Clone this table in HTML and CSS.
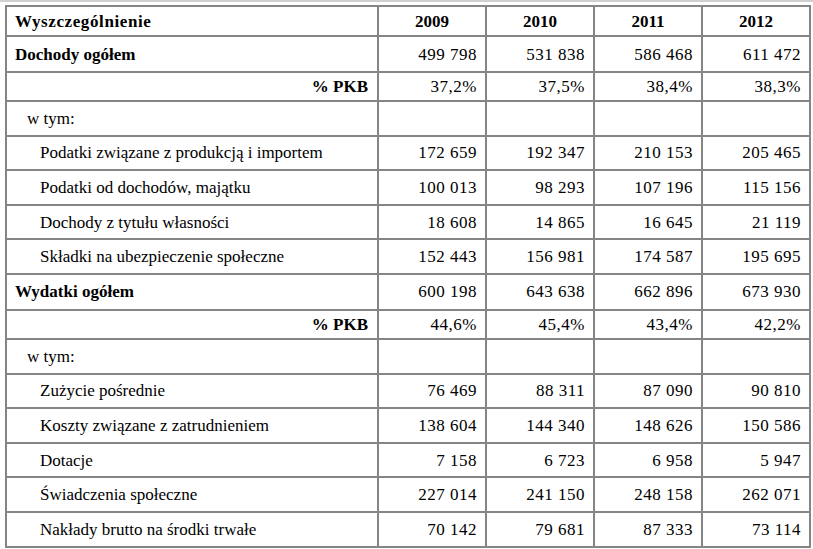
FILE: index.html
```html
<!DOCTYPE html>
<html lang="pl">
<head>
<meta charset="utf-8">
<title>Dochody i wydatki</title>
<link rel="stylesheet" href="styles.css">
</head>
<body>
<div class="topstrip"></div>
<table class="fin">
  <colgroup>
    <col class="c-name"><col class="c-num"><col class="c-num"><col class="c-num"><col class="c-num">
  </colgroup>
  <thead>
    <tr class="r-head">
      <th class="name">Wyszczególnienie</th><th>2009</th><th>2010</th><th>2011</th><th>2012</th>
    </tr>
  </thead>
  <tbody>
    <tr class="r-total dot">
      <td class="name b">Dochody ogółem</td><td>499 798</td><td>531 838</td><td>586 468</td><td>611 472</td>
    </tr>
    <tr class="r-pkb">
      <td class="pkb b">% PKB</td><td>37,2%</td><td>37,5%</td><td>38,4%</td><td>38,3%</td>
    </tr>
    <tr class="r dot">
      <td class="wtym">w tym:</td><td></td><td></td><td></td><td></td>
    </tr>
    <tr class="r dot">
      <td class="sub">Podatki związane z produkcją i importem</td><td>172 659</td><td>192 347</td><td>210 153</td><td>205 465</td>
    </tr>
    <tr class="r dot">
      <td class="sub">Podatki od dochodów, majątku</td><td>100 013</td><td>98 293</td><td>107 196</td><td>115 156</td>
    </tr>
    <tr class="r dot">
      <td class="sub">Dochody z tytułu własności</td><td>18 608</td><td>14 865</td><td>16 645</td><td>21 119</td>
    </tr>
    <tr class="r">
      <td class="sub">Składki na ubezpieczenie społeczne</td><td>152 443</td><td>156 981</td><td>174 587</td><td>195 695</td>
    </tr>
    <tr class="r-total dot">
      <td class="name b">Wydatki ogółem</td><td>600 198</td><td>643 638</td><td>662 896</td><td>673 930</td>
    </tr>
    <tr class="r-pkb">
      <td class="pkb b">% PKB</td><td>44,6%</td><td>45,4%</td><td>43,4%</td><td>42,2%</td>
    </tr>
    <tr class="r dot">
      <td class="wtym">w tym:</td><td></td><td></td><td></td><td></td>
    </tr>
    <tr class="r dot">
      <td class="sub">Zużycie pośrednie</td><td>76 469</td><td>88 311</td><td>87 090</td><td>90 810</td>
    </tr>
    <tr class="r dot">
      <td class="sub">Koszty związane z zatrudnieniem</td><td>138 604</td><td>144 340</td><td>148 626</td><td>150 586</td>
    </tr>
    <tr class="r dot">
      <td class="sub">Dotacje</td><td>7 158</td><td>6 723</td><td>6 958</td><td>5 947</td>
    </tr>
    <tr class="r dot">
      <td class="sub">Świadczenia społeczne</td><td>227 014</td><td>241 150</td><td>248 158</td><td>262 071</td>
    </tr>
    <tr class="r">
      <td class="sub">Nakłady brutto na środki trwałe</td><td>70 142</td><td>79 681</td><td>87 333</td><td>73 114</td>
    </tr>
  </tbody>
</table>
</body>
</html>
```

FILE: styles.css
```css
html, body {
  margin: 0;
  padding: 0;
  background: #ffffff;
}

body {
  font-family: "Liberation Serif", "Times New Roman", serif;
  font-size: 17px;
  color: #000000;
}

.topstrip {
  height: 2px;
  background: #d0d0d0;
}

.fin {
  margin: 3px 0 0 5px;
  width: 803px;
  border-collapse: collapse;
  table-layout: fixed;
  border: 2px solid #858585;
}

.c-name { width: 372px; }
.c-num { width: 108px; }

.fin th,
.fin td {
  border: 2px solid #858585;
  padding: 0 8px 0 8px;
  text-align: right;
  vertical-align: middle;
  line-height: 19px;
  white-space: nowrap;
  letter-spacing: 0.5px;
}

.fin th {
  font-size: 17px;
  font-weight: bold;
  text-align: center;
  padding: 0;
  letter-spacing: 0;
}

.fin th.name {
  text-align: left;
  padding-left: 8px;
  letter-spacing: 0.6px;
}

.r-head th { height: 28px; }
.r-total td { height: 34px; }
.r-pkb td { height: 27px; }
.r td { height: 32.6px; }

.fin tr.dot td {
  border-bottom: 1px dotted #7a7a7a;
}

.fin td.name,
.fin td.pkb,
.fin td.wtym,
.fin td.sub {
  letter-spacing: 0;
}

.fin td.name { text-align: left; padding-left: 8px; }
.fin td.b { font-weight: bold; }
.fin td.pkb { text-align: right; padding-right: 9px; }
.fin td.wtym { text-align: left; padding-left: 20px; }
.fin td.sub { text-align: left; padding-left: 33px; }
```
